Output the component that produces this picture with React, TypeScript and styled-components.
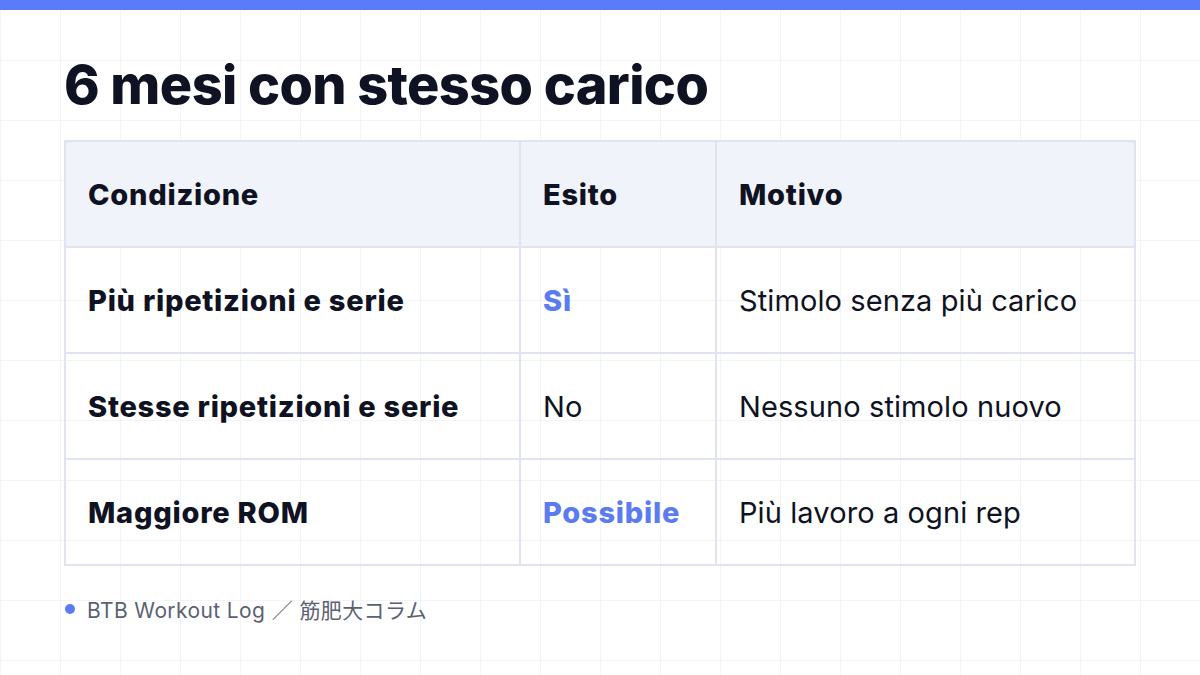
import React from 'react';
import styled, { createGlobalStyle } from 'styled-components';

const GlobalStyle = createGlobalStyle`
  html, body {
    margin: 0;
    padding: 0;
  }
  body {
    width: 1200px;
    height: 675px;
    overflow: hidden;
    font-family: Inter, "Noto Sans CJK JP", sans-serif;
    color: #111322;
  }
`;

const Slide = styled.div`
  width: 1200px;
  height: 675px;
  box-sizing: border-box;
  background-color: #ffffff;
  background-image:
    linear-gradient(to right, #f3f4f8 1px, transparent 1px),
    linear-gradient(to bottom, #f3f4f8 1px, transparent 1px);
  background-size: 60px 60px;
  background-position: 0 0;
  display: flex;
  flex-direction: column;
`;

const TopBar = styled.div`
  height: 10px;
  background: #5b7cfa;
  flex-shrink: 0;
`;

const Content = styled.div`
  padding: 46px 64px 0 64px;
  display: flex;
  flex-direction: column;
`;

const Title = styled.h1`
  margin: 0;
  font-size: 54px;
  font-weight: 800;
  letter-spacing: -0.6px;
  line-height: 58px;
  color: #0f1222;
`;

const Table = styled.table`
  margin-top: 26px;
  width: 1070px;
  border-collapse: collapse;
  table-layout: fixed;
`;

const HeadCell = styled.th<{ $w: number }>`
  width: ${(p) => p.$w}px;
  height: 106px;
  box-sizing: border-box;
  padding: 0 22px;
  background: #f1f3fb;
  border: 2px solid #e0e4f1;
  text-align: left;
  font-size: 29px;
  font-weight: 800;
  letter-spacing: 0.75px;
  color: #0f1222;
`;

const Cell = styled.td<{ $bold?: boolean; $accent?: boolean }>`
  height: 106px;
  box-sizing: border-box;
  padding: 0 22px;
  border: 2px solid #e0e4f1;
  font-size: 29px;
  font-weight: ${(p) => (p.$bold || p.$accent ? 800 : 400)};
  letter-spacing: ${(p) => (p.$bold || p.$accent ? '0.75px' : '0.1px')};
  color: ${(p) => (p.$accent ? '#5b7cf0' : '#0f1222')};
  white-space: nowrap;
`;

const Footer = styled.div`
  margin-top: 28px;
  display: flex;
  align-items: center;
  gap: 12px;
  padding-left: 1px;
  font-family: Inter, "Noto Sans CJK JP", sans-serif;
  font-size: 21px;
  letter-spacing: 0.4px;
  color: #5c6172;
`;

const Dot = styled.span`
  width: 10px;
  height: 10px;
  border-radius: 50%;
  background: #5b7cfa;
`;

const rows = [
  { cond: 'Più ripetizioni e serie', esito: 'Sì', accent: true, motivo: 'Stimolo senza più carico' },
  { cond: 'Stesse ripetizioni e serie', esito: 'No', accent: false, motivo: 'Nessuno stimolo nuovo' },
  { cond: 'Maggiore ROM', esito: 'Possibile', accent: true, motivo: 'Più lavoro a ogni rep' },
];

export default function App() {
  return (
    <>
      <GlobalStyle />
      <Slide>
        <TopBar />
        <Content>
          <Title>6 mesi con stesso carico</Title>
          <Table>
            <thead>
              <tr>
                <HeadCell $w={455}>Condizione</HeadCell>
                <HeadCell $w={196}>Esito</HeadCell>
                <HeadCell $w={419}>Motivo</HeadCell>
              </tr>
            </thead>
            <tbody>
              {rows.map((r) => (
                <tr key={r.cond}>
                  <Cell $bold>{r.cond}</Cell>
                  <Cell $accent={r.accent}>{r.esito}</Cell>
                  <Cell>{r.motivo}</Cell>
                </tr>
              ))}
            </tbody>
          </Table>
          <Footer>
            <Dot />
            <span>BTB Workout Log ／ 筋肥大コラム</span>
          </Footer>
        </Content>
      </Slide>
    </>
  );
}
